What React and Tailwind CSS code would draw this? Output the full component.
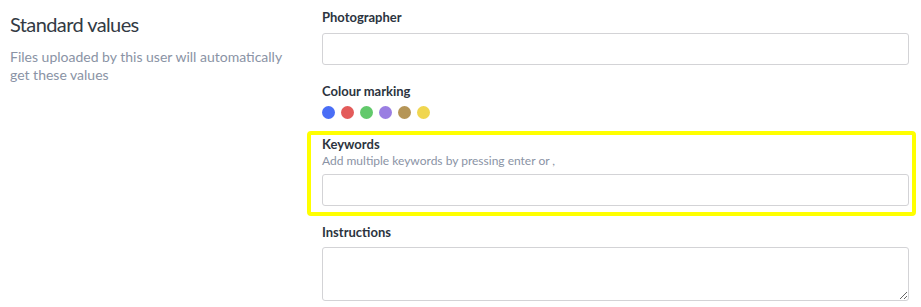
import React from "react";

const colours = ["#4a6ef6", "#e35b5a", "#62c96b", "#9a7ee2", "#b59557", "#f0d64f"];

export default function App() {
  return (
    <div className="w-[921px] h-[307px] bg-white flex font-['Lato',sans-serif] text-[#2c3440] overflow-hidden">

      {/* Left column */}
      <div className="w-[322px] shrink-0 pl-[10px] pr-[36px] pt-[11px]">
        <h1 className="text-[20px] leading-[26px] tracking-[-0.6px] font-normal text-[#333a44]">
          Standard values
        </h1>
        <p className="mt-[11px] text-[14px] leading-[18px] text-[#8a93a5]">
          Files uploaded by this user will automatically get these values
        </p>
      </div>

      {/* Right column */}
      <div className="w-[587px] shrink-0 pt-2">

        <label className="block text-[13px] leading-[18px] font-bold">
          Photographer
        </label>
        <input
          type="text"
          className="mt-[7px] block w-full h-[32px] border border-[#d3d3d6] rounded-[3px] bg-white outline-none"
        />

        <div className="mt-[17px] text-[13px] leading-[18px] font-bold">
          Colour marking
        </div>
        <div className="mt-[6px] flex gap-[6px]">
          {colours.map((c) => (
            <span
              key={c}
              className="w-[13px] h-[13px] rounded-full"
              style={{ backgroundColor: c }}
            />
          ))}
        </div>

        {/* Highlighted keywords block */}
        <div className="mt-[12px] -ml-[15px] -mr-[7px] border-4 border-[#ffff00] rounded-[4px] pl-[11px] pr-[3px] pb-[6px]">
          <label className="block text-[13px] leading-[18px] font-bold">
            Keywords
          </label>
          <div className="text-[12px] leading-[16px] text-[#8a93a5]">
            Add multiple keywords by pressing enter or ,
          </div>
          <input
            type="text"
            className="mt-[5px] block w-full h-[32px] border border-[#d3d3d6] rounded-[3px] bg-white outline-none"
          />
        </div>

        <label className="mt-[7px] block text-[13px] leading-[18px] font-bold">
          Instructions
        </label>
        <textarea className="mt-[6px] block w-full h-[54px] border border-[#d3d3d6] rounded-[3px] bg-white outline-none" />
      </div>
    </div>
  );
}
